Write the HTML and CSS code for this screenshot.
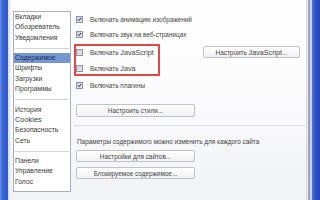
FILE: index.html
```html
<!DOCTYPE html>
<html lang="ru">
<head>
<meta charset="utf-8">
<title>Содержимое</title>
<link rel="stylesheet" href="styles.css">
</head>
<body>
<div class="win">
  <div class="edge-l"></div>
  <div class="main">
    <nav class="sidebar">
      <div class="item">Вкладки</div>
      <div class="item">Обозреватель</div>
      <div class="item">Уведомления</div>
      <div class="sep"></div>
      <div class="item active">Содержимое</div>
      <div class="item">Шрифты</div>
      <div class="item">Загрузки</div>
      <div class="item">Программы</div>
      <div class="sep"></div>
      <div class="item">История</div>
      <div class="item"><span class="lat">Cookies</span></div>
      <div class="item">Безопасность</div>
      <div class="item">Сеть</div>
      <div class="sep"></div>
      <div class="item">Панели</div>
      <div class="item">Управление</div>
      <div class="item">Голос</div>
    </nav>
    <section class="content">
      <label class="row r1"><span class="cb checked"><svg viewBox="0 0 7 7"><path d="M1.3 3.4 L2.9 5.1 L5.8 1.4"/></svg></span>Включать анимацию изображений</label>
      <label class="row r2"><span class="cb checked"><svg viewBox="0 0 7 7"><path d="M1.3 3.4 L2.9 5.1 L5.8 1.4"/></svg></span>Включать звук на веб-страницах</label>
      <div class="jsline">
        <div class="mark">
          <label class="row inner"><span class="cb"></span>Включать&nbsp;<span class="lat">JavaScript</span></label>
          <label class="row inner second"><span class="cb"></span>Включать&nbsp;<span class="lat">Java</span></label>
        </div>
        <button class="btn btn-js">Настроить <span class="lat">JavaScript</span>...</button>
      </div>
      <label class="row r3"><span class="cb checked"><svg viewBox="0 0 7 7"><path d="M1.3 3.4 L2.9 5.1 L5.8 1.4"/></svg></span>Включать плагины</label>
      <button class="btn btn-wide btn-styles">Настроить стили...</button>
      <div class="hr"></div>
      <p class="note">Параметры содержимого можно изменить для каждого сайта</p>
      <button class="btn btn-wide btn-sites">Настройки для сайтов...</button>
      <button class="btn btn-wide btn-block">Блокируемое содержимое...</button>
    </section>
  </div>
  <div class="edge-r"></div>
</div>
</body>
</html>
```

FILE: styles.css
```css
* { box-sizing: border-box; }
html, body { margin: 0; padding: 0; }
body {
  width: 320px;
  height: 200px;
  overflow: hidden;
  font-family: "Liberation Sans", Arial, sans-serif;
  font-size: 6.4px;
  color: #444;
}
.lat { font-size: 7.2px; }
.win {
  display: flex;
  width: 320px;
  height: 200px;
}
.edge-l {
  width: 11px;
  flex: none;
  background: linear-gradient(90deg, #6a93e8 0, #3b69d8 2px, #2c5ac9 8px, #d4d9e5 8px, #e9ecf2 10px, #f6f6f8 11px);
}
.edge-r {
  width: 14px;
  flex: none;
  background: linear-gradient(90deg, #d6d8dc 0, #d6d8dc 1px, #eceef2 1px, #eceef2 2px, #9ca5ba 2px, #9ca5ba 4px, #c7cfe0 4px, #c7cfe0 6px, #5577d6 6px, #2f52c4 9px, #2446b6 14px);
}
.main {
  flex: 1;
  display: flex;
  gap: 3px;
  padding: 11px 0 0 2px;
  background: linear-gradient(#fefefe 0, #fcfcfd 40%, #f1f2f6 100%);
}
.sidebar {
  width: 58px;
  height: 181px;
  flex: none;
  border: 1px solid #a9b0bd;
  background: #fff;
  font-size: 6.8px;
}
.sidebar .lat { font-size: 7.4px; }
.item {
  height: 10.3px;
  line-height: 10.3px;
  padding-left: 1px;
  white-space: nowrap;
  overflow: hidden;
  color: #3a3a3a;
}
.item.active {
  background: #7596cf;
  color: #1c2c5c;
}
.sep {
  height: 10.3px;
  display: flex;
  align-items: center;
  padding: 0 1px;
}
.sep::before {
  content: "";
  flex: 1;
  height: 1px;
  background: #d2d4d8;
}
.content {
  flex: 1;
  display: flex;
  flex-direction: column;
  align-items: flex-start;
  padding-right: 1px;
}
.row {
  display: flex;
  align-items: center;
  height: 12px;
  padding-left: 2px;
  white-space: nowrap;
}
.r1 { margin-top: 2px; }
.r2 { margin-top: 3px; }
.r3 { margin-top: 3px; }
.cb {
  width: 7px;
  height: 7px;
  flex: none;
  margin-right: 7px;
  border: 1px solid #8e97aa;
  background: linear-gradient(135deg, #cfd1da, #e4e5eb);
  display: flex;
}
.cb svg {
  width: 5px;
  height: 5px;
  fill: none;
  stroke: #1d2b55;
  stroke-width: 1.4;
}
.jsline {
  display: flex;
  align-items: flex-start;
  margin-top: 4px;
}
.mark {
  width: 86px;
  height: 32px;
  border: 2px solid #e24848;
}
.row.inner { padding-left: 0; }
.row.second { margin-top: 4px; }
.btn {
  font-family: inherit;
  font-size: 6.4px;
  color: #444;
  height: 12px;
  padding: 0;
  border: 1px solid #bfc2c8;
  border-radius: 2px;
  background: linear-gradient(#ffffff, #f1f1f3);
  white-space: nowrap;
}
.btn-js {
  width: 97px;
  margin-left: 43px;
  margin-top: 2px;
}
.btn-wide {
  width: 119px;
  margin-left: 2px;
}
.btn-styles { margin-top: 13px; height: 13px; }
.hr {
  align-self: stretch;
  height: 1px;
  margin-top: 8px;
  margin-left: -1px;
  background: #dcdde1;
}
.note {
  margin: 10px 0 0 3px;
  height: 12px;
  line-height: 12px;
  white-space: nowrap;
}
.btn-sites { margin-top: 2px; }
.btn-block { margin-top: 5px; }
```
